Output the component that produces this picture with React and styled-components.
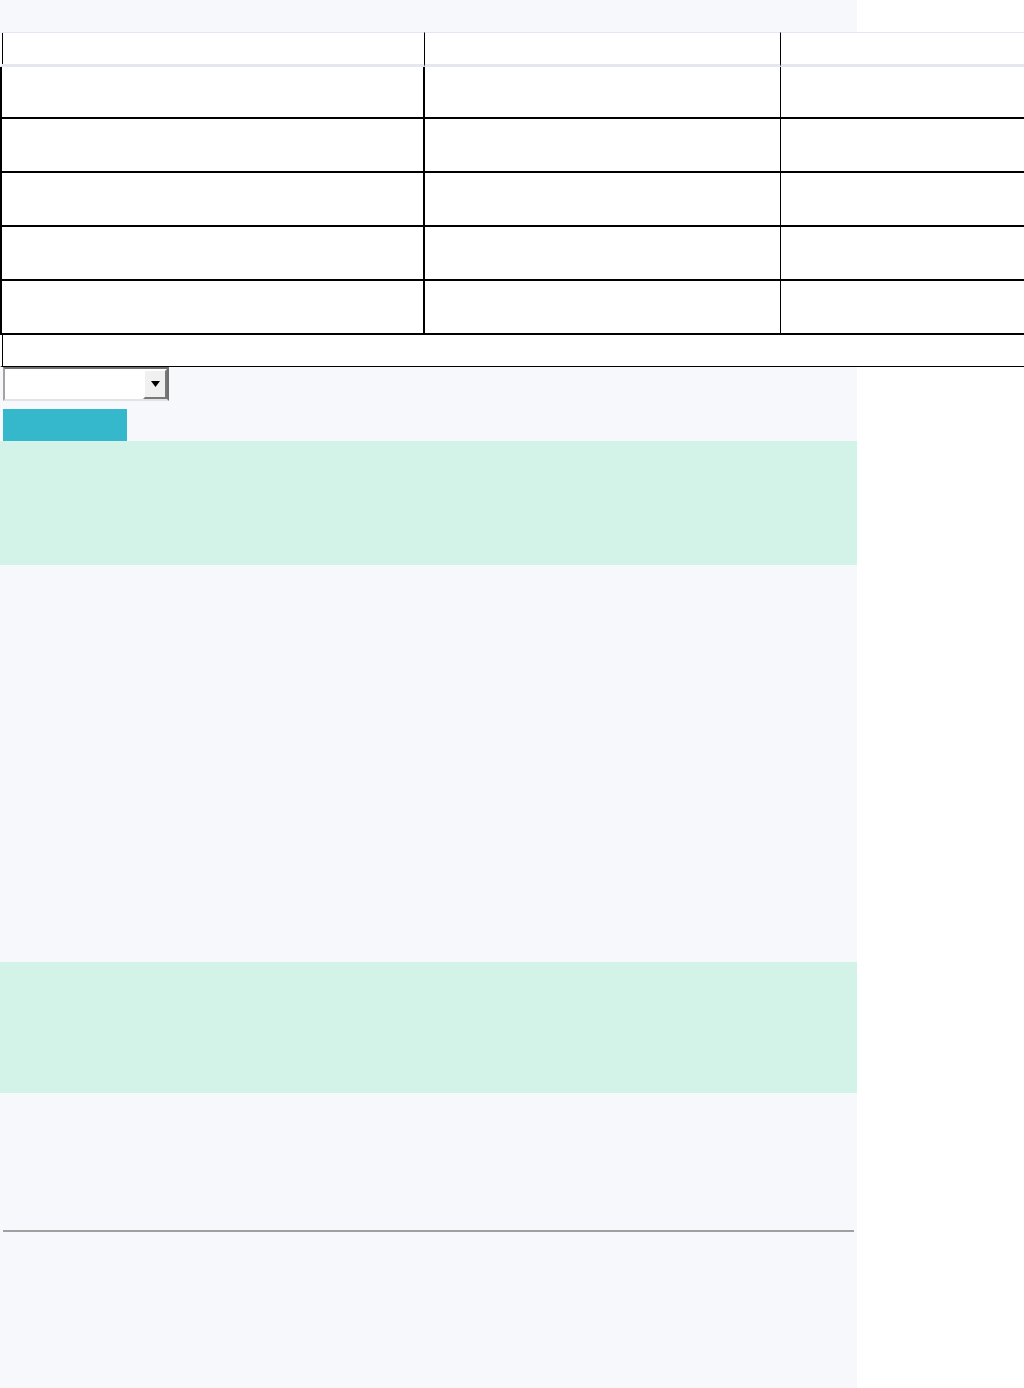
import React from "react";
import styled, { createGlobalStyle } from "styled-components";

const Global = createGlobalStyle`
  html, body { margin: 0; padding: 0; background: #ffffff; }
  body { font-family: "Liberation Sans", Arial, sans-serif; font-size: 14px; color: #222; }
`;

const Page = styled.div`
  width: 857px;
  min-height: 1388px;
  background: #f7f8fc;
  padding-top: 32px;
  box-sizing: border-box;
  display: flex;
  flex-direction: column;
`;

const Table = styled.table`
  width: 1026px;
  border-collapse: separate;
  border-spacing: 0;
  background: #ffffff;
  table-layout: fixed;
`;

const HeadCell = styled.th`
  height: 31px;
  padding: 0;
  box-sizing: content-box;
  border-top: 1px solid #e4e6f2;
  border-bottom: 3px solid #e4e6f2;
  border-right: ${(p) => (p.$last ? "none" : "1px solid #000")};
  border-left: ${(p) => (p.$first ? "2px solid #fff" : "none")};
  box-shadow: ${(p) => (p.$first ? "inset 1px 0 0 #000" : "none")};
`;

const BodyCell = styled.td`
  height: ${(p) => (p.$short ? 50 : 52)}px;
  padding: 0;
  box-sizing: content-box;
  border-bottom: 2px solid #000;
  border-right: ${(p) => (p.$last ? "none" : p.$thick ? "2px solid #000" : "1px solid #000")};
  border-left: ${(p) => (p.$first ? "2px solid #000" : "none")};
`;

const FootCell = styled.td`
  height: 31px;
  padding: 0;
  border-left: 2px solid #fff;
  box-shadow: inset 1px 0 0 #000;
  border-bottom: 1px solid #000;
`;

const Controls = styled.div`
  display: flex;
  flex-direction: column;
  align-items: flex-start;
  padding-left: 3px;
  gap: 8px;
`;

const SelectWrap = styled.div`
  position: relative;
  width: 166px;
  height: 34px;
  box-sizing: border-box;
`;

const Select = styled.select`
  appearance: none;
  -webkit-appearance: none;
  width: 100%;
  height: 100%;
  margin: 0;
  box-sizing: border-box;
  background: #ffffff;
  border-style: solid;
  border-width: 2px;
  border-color: #6f6f6f #6f6f6f #e3e3e3 #a3a3a3;
  font-family: "Liberation Sans", Arial, sans-serif;
  font-size: 14px;
  padding: 0 28px 0 4px;
  outline: none;
`;

const ArrowButton = styled.span`
  position: absolute;
  top: 2px;
  right: 2px;
  width: 24px;
  height: 30px;
  box-sizing: border-box;
  background: #f0f0f0;
  border-style: solid;
  border-width: 2px;
  border-color: #ffffff #787878 #787878 #ffffff;
  display: flex;
  align-items: center;
  justify-content: center;
  pointer-events: none;
`;

const Button = styled.button`
  width: 124px;
  height: 32px;
  border: none;
  margin: 0;
  padding: 0;
  background: #36b8cc;
  cursor: pointer;
`;

const Band = styled.section`
  height: ${(p) => p.$h}px;
  background: ${(p) => (p.$green ? "#d3f3e8" : "transparent")};
`;

const Rule = styled.hr`
  margin: 0 3px;
  border: none;
  height: 2px;
  background: #a0a0a0;
`;

const cols = [425, 356, 245];

export default function App() {
  const rows = [0, 1, 2, 3, 4];
  return (
    <>
      <Global />
      <Page>
        <Table>
          <colgroup>
            {cols.map((w, i) => (
              <col key={i} style={{ width: w }} />
            ))}
          </colgroup>
          <thead>
            <tr>
              <HeadCell $first />
              <HeadCell />
              <HeadCell $last />
            </tr>
          </thead>
          <tbody>
            {rows.map((r) => (
              <tr key={r}>
                <BodyCell $first $thick $short={r === 0} />
                <BodyCell $short={r === 0} />
                <BodyCell $last $short={r === 0} />
              </tr>
            ))}
          </tbody>
          <tfoot>
            <tr>
              <FootCell colSpan={3} />
            </tr>
          </tfoot>
        </Table>
        <Controls>
          <SelectWrap>
            <Select aria-label="select">
              <option value=""></option>
            </Select>
            <ArrowButton>
              <svg width="9" height="6" viewBox="0 0 9 6">
                <path d="M0 0h9L4.5 6z" fill="#000" />
              </svg>
            </ArrowButton>
          </SelectWrap>
          <Button />
        </Controls>
        <Band $green $h={124} />
        <Band $h={397} />
        <Band $green $h={131} />
        <Band $h={137} />
        <Rule />
      </Page>
    </>
  );
}
